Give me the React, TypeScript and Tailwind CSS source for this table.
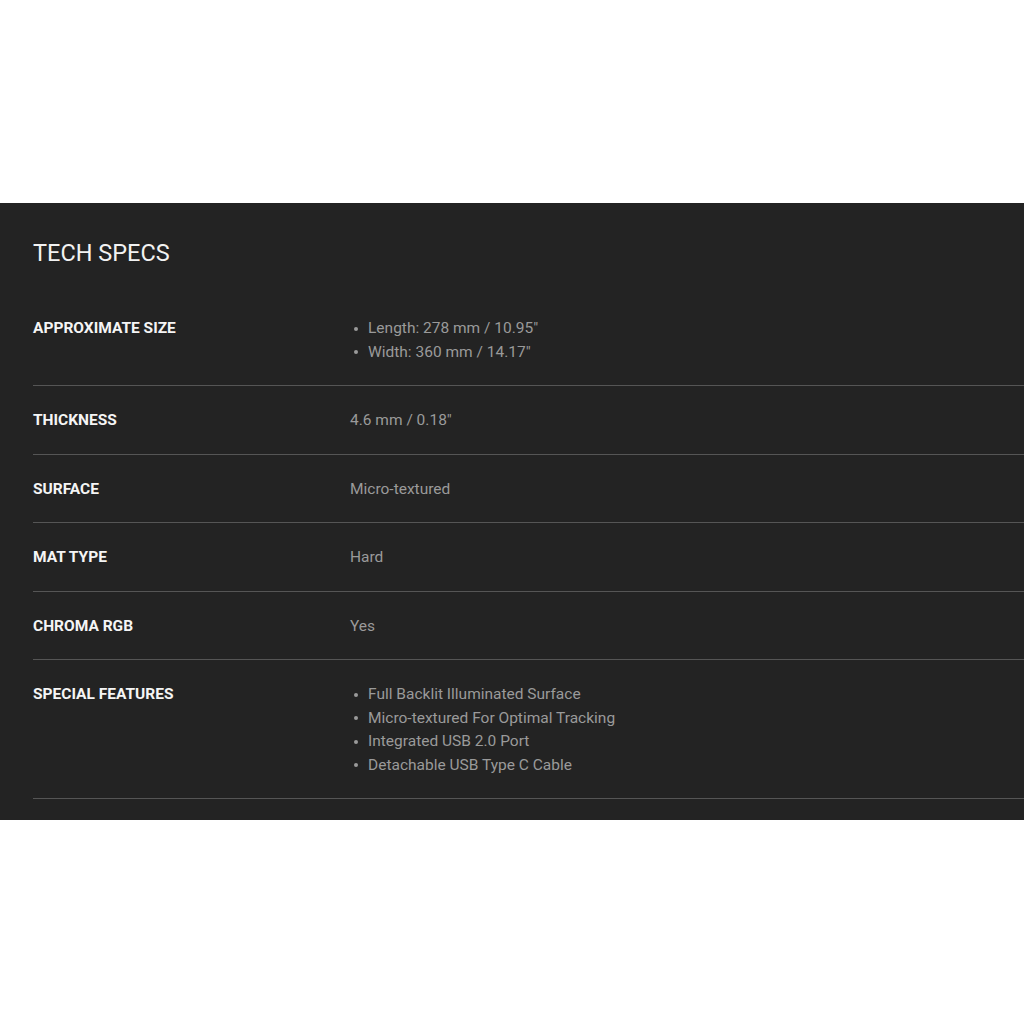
import React from "react";

type Spec = { label: string; values: string[]; bullets: boolean };

const specs: Spec[] = [
  { label: "APPROXIMATE SIZE", values: ["Length: 278 mm / 10.95\"", "Width: 360 mm / 14.17\""], bullets: true },
  { label: "THICKNESS", values: ["4.6 mm / 0.18\""], bullets: false },
  { label: "SURFACE", values: ["Micro-textured"], bullets: false },
  { label: "MAT TYPE", values: ["Hard"], bullets: false },
  { label: "CHROMA RGB", values: ["Yes"], bullets: false },
  {
    label: "SPECIAL FEATURES",
    values: [
      "Full Backlit Illuminated Surface",
      "Micro-textured For Optimal Tracking",
      "Integrated USB 2.0 Port",
      "Detachable USB Type C Cable",
    ],
    bullets: true,
  },
];

export default function App() {
  return (
    <div className="min-h-[1024px] bg-white" style={{ fontFamily: "Roboto, 'Noto Sans', Arial, sans-serif" }}>
      <div className="h-[203px]" />
      <div className="bg-[#232323] pl-[33px] pt-[36px] pb-[21px]">
        <h2 className="text-[23.5px] leading-[28px] text-[#f2f2f2] font-normal mb-[27px]">TECH SPECS</h2>
        <div>
          {specs.map((s) => (
            <div key={s.label} className="flex border-b border-[#555555] pt-[23px] pb-[21px]">
              <div className="w-[317px] shrink-0 text-[15.5px] leading-[23.5px] font-bold text-[#f5f5f5]">{s.label}</div>
              <div className="text-[15.5px] leading-[23.5px] text-[#9a9a9a]">
                {s.bullets ? (
                  <ul>
                    {s.values.map((v) => (
                      <li key={v} className="flex items-center">
                        <span className="ml-[4px] mr-[10px] h-[4px] w-[4px] rounded-full bg-[#9a9a9a]" />
                        <span>{v}</span>
                      </li>
                    ))}
                  </ul>
                ) : (
                  <div>{s.values[0]}</div>
                )}
              </div>
            </div>
          ))}
        </div>
      </div>
    </div>
  );
}
